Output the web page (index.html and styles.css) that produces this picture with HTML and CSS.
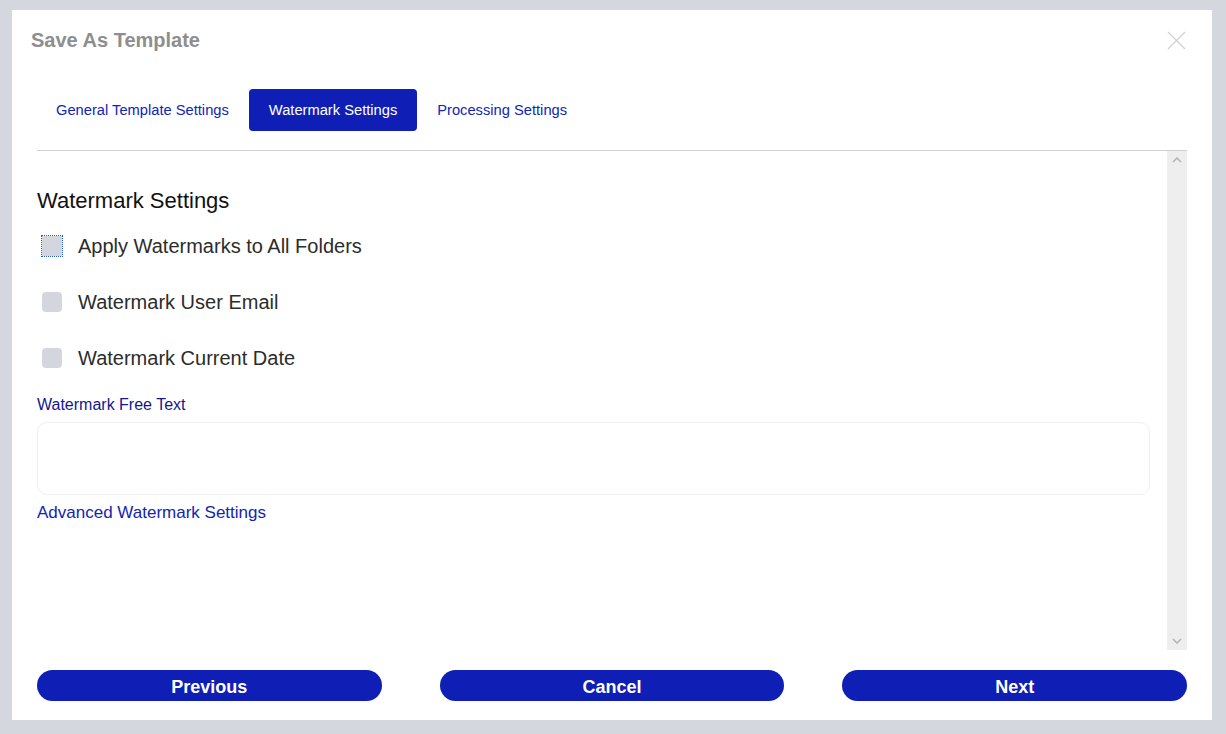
FILE: index.html
```html
<html>

<head>
  <link rel="stylesheet" href="styles.css">
</head>

<body>
  <div class="dialog">
    <div class="dialog-head">
      <h1 class="title">Save As Template</h1>
      <a class="close" title="Close">
        <svg viewBox="0 0 20 20">
          <path d="M1 1L19 19M19 1L1 19" />
        </svg>
      </a>
    </div>

    <div class="tabs">
      <a class="tab">General Template Settings</a>
      <a class="tab active">Watermark Settings</a>
      <a class="tab">Processing Settings</a>
    </div>

    <div class="scroll">
      <div class="content">
        <h2 class="section-title">Watermark Settings</h2>

        <label class="check-row">
          <span class="box focus"></span>
          <span class="check-label">Apply Watermarks to All Folders</span>
        </label>
        <label class="check-row">
          <span class="box"></span>
          <span class="check-label">Watermark User Email</span>
        </label>
        <label class="check-row">
          <span class="box"></span>
          <span class="check-label">Watermark Current Date</span>
        </label>

        <div class="field-label">Watermark Free Text</div>
        <div class="free-text"></div>
        <a class="advanced">Advanced Watermark Settings</a>
      </div>

      <div class="scrollbar">
        <svg class="arrow" viewBox="0 0 10 6">
          <path d="M1 5L5 1L9 5" />
        </svg>
        <svg class="arrow" viewBox="0 0 10 6">
          <path d="M1 1L5 5L9 1" />
        </svg>
      </div>
    </div>

    <div class="footer">
      <button class="btn">Previous</button>
      <button class="btn">Cancel</button>
      <button class="btn">Next</button>
    </div>
  </div>
</body>

</html>
```

FILE: styles.css
```css
* {
  margin: 0;
  padding: 0;
  box-sizing: border-box;
}

body {
  background: #d4d7de;
  font-family: "Liberation Sans", Arial, sans-serif;
  overflow: hidden;
}

.dialog {
  margin: 10px 0 0 12px;
  width: 1200px;
  height: 710px;
  background: #ffffff;
  display: flex;
  flex-direction: column;
  padding: 0 25px;
}

.dialog-head {
  display: flex;
  justify-content: space-between;
  align-items: flex-start;
  padding-top: 18px;
  margin-left: -6px;
  margin-right: 1px;
}

.title {
  font-size: 20px;
  line-height: 24px;
  font-weight: bold;
  color: #8e8e8e;
}

.close {
  margin-top: 3px;
  width: 19px;
  height: 19px;
}

.close svg {
  width: 19px;
  height: 19px;
  stroke: #d0d0d0;
  stroke-width: 1.3;
  fill: none;
}

.tabs {
  display: flex;
  margin-top: 37px;
  padding-bottom: 19px;
  border-bottom: 1px solid #d2d2d2;
}

.tab {
  height: 42px;
  line-height: 43px;
  padding: 0 20px;
  font-size: 14.7px;
  color: #1024b8;
  border-radius: 4px;
  cursor: pointer;
}

.tab:first-child {
  margin-left: -1px;
}

.tab.active {
  background: #0f1fb5;
  color: #ffffff;
}

.scroll {
  display: flex;
  height: 499px;
}

.content {
  flex: 1;
  padding-top: 37px;
  padding-right: 17px;
}

.section-title {
  font-size: 22px;
  line-height: 26px;
  font-weight: normal;
  color: #111111;
  margin-bottom: 4px;
}

.check-row {
  display: flex;
  align-items: center;
  height: 56px;
  padding-left: 5px;
  gap: 16px;
}

.box {
  width: 20px;
  height: 20px;
  border-radius: 4px;
  background: #d3d6dd;
}

.box.focus {
  border-radius: 0;
  outline: 1px dotted #2356d6;
}

.check-label {
  font-size: 20px;
  color: #2c2c2c;
}

.field-label {
  margin-top: 9px;
  font-size: 16px;
  line-height: 20px;
  color: #13178f;
}

.free-text {
  margin-top: 7px;
  height: 73px;
  border: 1.5px solid #efefef;
  border-radius: 10px;
}

.advanced {
  display: block;
  margin-top: 8px;
  font-size: 17px;
  line-height: 20px;
  color: #1424b0;
  cursor: pointer;
}

.scrollbar {
  width: 20px;
  background: #eeeeee;
  display: flex;
  flex-direction: column;
  justify-content: space-between;
  align-items: center;
  padding: 6px 0;
}

.arrow {
  width: 10px;
  height: 6px;
  stroke: #b4b4b4;
  stroke-width: 1.5;
  fill: none;
}

.footer {
  display: grid;
  grid-template-columns: 1fr 1fr 1fr;
  gap: 58px;
  margin-top: 20px;
}

.btn {
  height: 31px;
  padding-top: 3px;
  border: none;
  border-radius: 16px;
  background: #0f1fb5;
  color: #ffffff;
  font-family: "Liberation Sans", Arial, sans-serif;
  font-size: 18px;
  font-weight: bold;
  cursor: pointer;
}
```
